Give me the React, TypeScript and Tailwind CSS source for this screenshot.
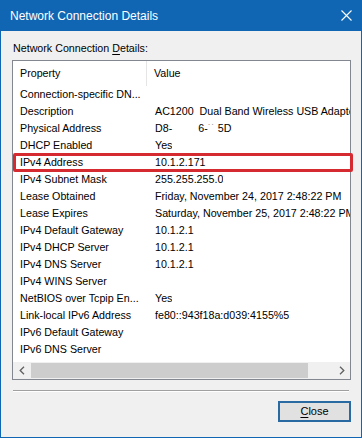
import React from "react";

const rows: [string, React.ReactNode][] = [
  ["Connection-specific DN...", ""],
  ["Description", "AC1200  Dual Band Wireless USB Adapter"],
  [
    "Physical Address",
    <span>
      D8-
      <span className="ml-[26px]">
        6-<span className="text-[#9a9a9a]">˙˙</span> 5D
      </span>
    </span>,
  ],
  ["DHCP Enabled", "Yes"],
  ["IPv4 Address", "10.1.2.171"],
  ["IPv4 Subnet Mask", "255.255.255.0"],
  ["Lease Obtained", "Friday, November 24, 2017 2:48:22 PM"],
  ["Lease Expires", "Saturday, November 25, 2017 2:48:22 PM"],
  ["IPv4 Default Gateway", "10.1.2.1"],
  ["IPv4 DHCP Server", "10.1.2.1"],
  ["IPv4 DNS Server", "10.1.2.1"],
  ["IPv4 WINS Server", ""],
  ["NetBIOS over Tcpip En...", "Yes"],
  ["Link-local IPv6 Address", "fe80::943f18a:d039:4155%5"],
  ["IPv6 Default Gateway", ""],
  ["IPv6 DNS Server", ""],
];

export default function App() {
  return (
    <div
      className="w-[362px] h-[438px] bg-[#1066b3] px-[1px] pb-[1px] flex flex-col overflow-hidden"
      style={{ fontFamily: '"Liberation Sans", Arial, sans-serif' }}
    >
      {/* Title bar */}
      <div className="h-[31px] flex items-center justify-between pl-[9px] pr-[8px] text-white text-[12px]">
        <span>Network Connection Details</span>
        <svg width="11" height="11" viewBox="0 0 11 11" className="mr-[1px]">
          <path d="M0.5 0.5 L10.5 10.5 M10.5 0.5 L0.5 10.5" stroke="#ffffff" strokeWidth="1.1" fill="none" />
        </svg>
      </div>

      {/* Body */}
      <div className="flex-1 bg-[#f0f0f0] relative pl-[11px] pr-[10px] flex flex-col text-[10.7px] text-black">
        <div className="mt-[9px] h-[16px] leading-[16px] pl-[1px]">
          Network Connection <span className="underline underline-offset-2">D</span>etails:
        </div>

        {/* List box */}
        <div className="mt-[4px] h-[320px] border border-[#828790] bg-white flex flex-col overflow-hidden">
          <div className="h-[25px] flex shrink-0 items-center">
            <div className="w-[134px] h-full flex items-center pl-[7px] border-r border-[#e5e5e5]">Property</div>
            <div className="pl-[7px]">Value</div>
          </div>
          {rows.map(([k, v], i) => (
            <div key={i} className="h-[17px] shrink-0 flex items-center whitespace-nowrap leading-[17px]">
              <div className="w-[135px] shrink-0 pl-[7px] overflow-hidden">{k}</div>
              <div className="pl-[7px] overflow-hidden whitespace-pre">{v}</div>
            </div>
          ))}
          <div className="flex-1" />
          {/* Horizontal scrollbar */}
          <div className="h-[17px] shrink-0 flex bg-[#f0f0f0]">
            <div className="w-[17px] flex items-center justify-center">
              <svg width="6" height="9" viewBox="0 0 6 9">
                <path d="M5 0.8 L1.2 4.5 L5 8.2" stroke="#606060" strokeWidth="1.3" fill="none" />
              </svg>
            </div>
            <div className="flex-1 flex py-[1px]">
              <div className="ml-[1px] w-[277px] bg-[#cdcdcd]" />
            </div>
            <div className="w-[17px] flex items-center justify-center">
              <svg width="6" height="9" viewBox="0 0 6 9">
                <path d="M1 0.8 L4.8 4.5 L1 8.2" stroke="#606060" strokeWidth="1.3" fill="none" />
              </svg>
            </div>
          </div>
        </div>

        {/* Separator */}
        <div className="mt-[10px] ml-[1px] w-[336px] h-[1px] bg-[#a0a0a0]" />
        <div className="ml-[1px] w-[336px] h-[1px] bg-white" />

        {/* Close button */}
        <div className="mt-[9px] flex justify-end">
          <div className="w-[73px] h-[21px] border-2 border-[#2a6aa2] bg-[#e1e1e1] flex items-center justify-center text-[11px]">
            <span>
              <span className="underline underline-offset-2">C</span>lose
            </span>
          </div>
        </div>

        {/* Red highlight */}
        <div className="absolute left-[12px] top-[122px] w-[340px] h-[19px] border-[3px] border-[#d42a30] rounded-[2px]" />
      </div>
    </div>
  );
}
